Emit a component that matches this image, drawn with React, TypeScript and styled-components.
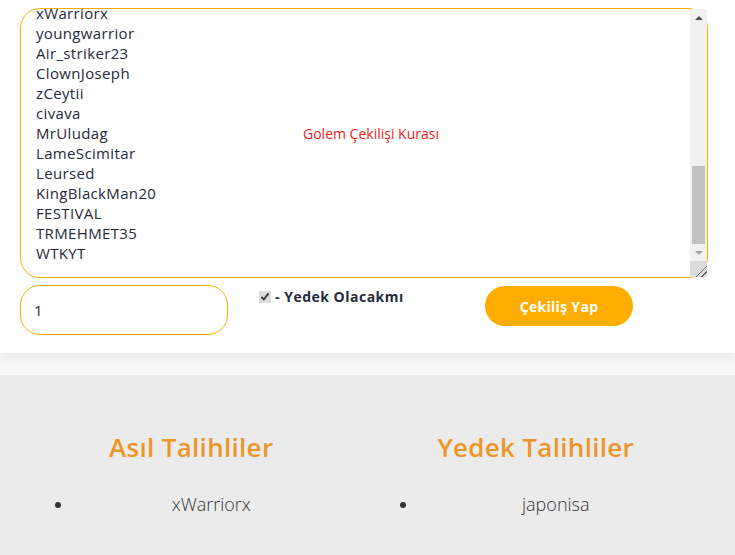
import React, { useEffect, useRef } from "react";
import styled, { createGlobalStyle } from "styled-components";

const GlobalStyle = createGlobalStyle`
  html, body {
    margin: 0;
    padding: 0;
    background: #f8f8f8;
    font-family: "Open Sans", "Noto Sans", sans-serif;
    overflow: hidden;
  }
`;

const names = [
  "ArdaGamer", "kralinsan", "Efe_Pro", "SlayerTR", "blackwolf34", "Mertcan07",
  "DarkKnightx", "pusatci", "OyuncuBey", "thebossTR", "KaanYT", "zeyno",
  "Taha_06", "ShadowHunt", "elif1905", "MinecraftKing", "burakkk", "NoobMaster",
  "aslan_kral", "EnesGG", "SerdarTR", "hayalet35", "japonisa", "BatuhanX",
  "Crafter42", "xWarriorx", "youngwarrior", "Air_striker23", "ClownJoseph",
  "zCeytii", "civava", "MrUludag", "LameScimitar", "Leursed", "KingBlackMan20",
  "FESTIVAL", "TRMEHMET35", "WTKYT",
];

const Card = styled.section`
  background: #fff;
  padding: 8px 27px 18px 20px;
  box-shadow: 0 2px 12px rgba(0, 0, 0, 0.1);
  margin-bottom: 22px;
`;

const AreaWrap = styled.div`
  position: relative;
`;

const NameArea = styled.textarea`
  display: block;
  box-sizing: border-box;
  width: 688px;
  height: 270px;
  padding: 6px 32px 14px 15px;
  border: 1px solid #ffae00;
  border-radius: 20px;
  font-family: "Open Sans", "Noto Sans", sans-serif;
  font-size: 15px;
  font-weight: 500;
  letter-spacing: 0.35px;
  line-height: 20px;
  color: #262a3a;
  outline: none;
  resize: none;
  overflow: hidden;
`;

const AreaTitle = styled.span`
  position: absolute;
  left: 283px;
  top: 116px;
  font-size: 14px;
  color: #ee1c1c;
  pointer-events: none;
`;

/* drawn scrollbar + resizer laid over the textarea's right edge */
const ScrollBar = styled.div`
  position: absolute;
  top: 1px;
  right: 1px;
  bottom: 1px;
  width: 17px;
  display: flex;
  flex-direction: column;
  background: #f1f1f1;
`;

const ScrollButton = styled.div<{ $dir: "up" | "down" }>`
  height: 17px;
  flex: none;
  display: flex;
  align-items: center;
  justify-content: center;

  &::before {
    content: "";
    border-left: 4px solid transparent;
    border-right: 4px solid transparent;
    ${({ $dir }) =>
      $dir === "up"
        ? "border-bottom: 4px solid #505050;"
        : "border-top: 4px solid #a3a3a3;"}
  }
`;

const ScrollTrack = styled.div`
  flex: 1;
  display: flex;
  flex-direction: column;
  justify-content: flex-end;
  padding: 0 2px;
`;

const ScrollThumb = styled.div`
  height: 78px;
  background: #c1c1c1;
`;

const Resizer = styled.div`
  height: 16px;
  flex: none;
  background:
    linear-gradient(135deg, transparent 64%, #666 64%, #666 69%, transparent 69%, transparent 80%, #666 80%, #666 85%, transparent 85%),
    #dcdcdc;
`;

const Controls = styled.div`
  display: grid;
  grid-template-columns: 208px 197px 148px;
  column-gap: 30px;
  margin-top: 7px;
  align-items: start;
`;

const CountInput = styled.input`
  box-sizing: border-box;
  width: 208px;
  height: 50px;
  padding: 0 13px;
  border: 1px solid #ffae00;
  border-radius: 20px;
  font-family: "Open Sans", "Noto Sans", sans-serif;
  font-size: 15px;
  color: #262a3a;
  outline: none;
`;

const CheckLabel = styled.label`
  display: flex;
  align-items: center;
  gap: 4px;
  margin-top: 2px;
  font-size: 14px;
  font-weight: 700;
  letter-spacing: 0.5px;
  color: #262a3a;
  white-space: nowrap;

  input {
    margin: 0 0 0 1px;
    width: 12px;
    height: 12px;
    accent-color: #dcdcdc;
  }
`;

const DrawButton = styled.button`
  width: 148px;
  height: 40px;
  margin-top: 1px;
  border: none;
  border-radius: 20px;
  background: #ffad00;
  color: #fff;
  font-family: "Open Sans", "Noto Sans", sans-serif;
  font-size: 14px;
  font-weight: 700;
  letter-spacing: 0.3px;
  cursor: pointer;
`;

const Results = styled.section`
  background: #ebebeb;
  display: grid;
  grid-template-columns: 1fr 1fr;
  padding: 54px 27px 42px 19px;
`;

const Column = styled.div`
  padding: 0 15px;
`;

const ColumnTitle = styled.h2`
  margin: 0;
  text-align: center;
  font-size: 26px;
  font-weight: 600;
  letter-spacing: 0.3px;
  color: #ec962a;
`;

const WinnerList = styled.ul`
  margin: 27px 0 0;
  padding-left: 40px;
`;

const Winner = styled.li`
  text-align: center;
  font-size: 18px;
  font-weight: 300;
  color: #333;
`;

export default function App() {
  const areaRef = useRef<HTMLTextAreaElement>(null);

  useEffect(() => {
    if (areaRef.current) {
      areaRef.current.scrollTop = areaRef.current.scrollHeight;
    }
  }, []);

  return (
    <>
      <GlobalStyle />
      <Card>
        <AreaWrap>
          <NameArea ref={areaRef} defaultValue={names.join("\n")} />
          <AreaTitle>Golem Çekilişi Kurası</AreaTitle>
          <ScrollBar>
            <ScrollButton $dir="up" />
            <ScrollTrack>
              <ScrollThumb />
            </ScrollTrack>
            <ScrollButton $dir="down" />
            <Resizer />
          </ScrollBar>
        </AreaWrap>
        <Controls>
          <CountInput type="text" defaultValue="1" />
          <CheckLabel>
            <input type="checkbox" defaultChecked />- Yedek Olacakmı
          </CheckLabel>
          <DrawButton>Çekiliş Yap</DrawButton>
        </Controls>
      </Card>
      <Results>
        <Column>
          <ColumnTitle>Asıl Talihliler</ColumnTitle>
          <WinnerList>
            <Winner>xWarriorx</Winner>
          </WinnerList>
        </Column>
        <Column>
          <ColumnTitle>Yedek Talihliler</ColumnTitle>
          <WinnerList>
            <Winner>japonisa</Winner>
          </WinnerList>
        </Column>
      </Results>
    </>
  );
}
